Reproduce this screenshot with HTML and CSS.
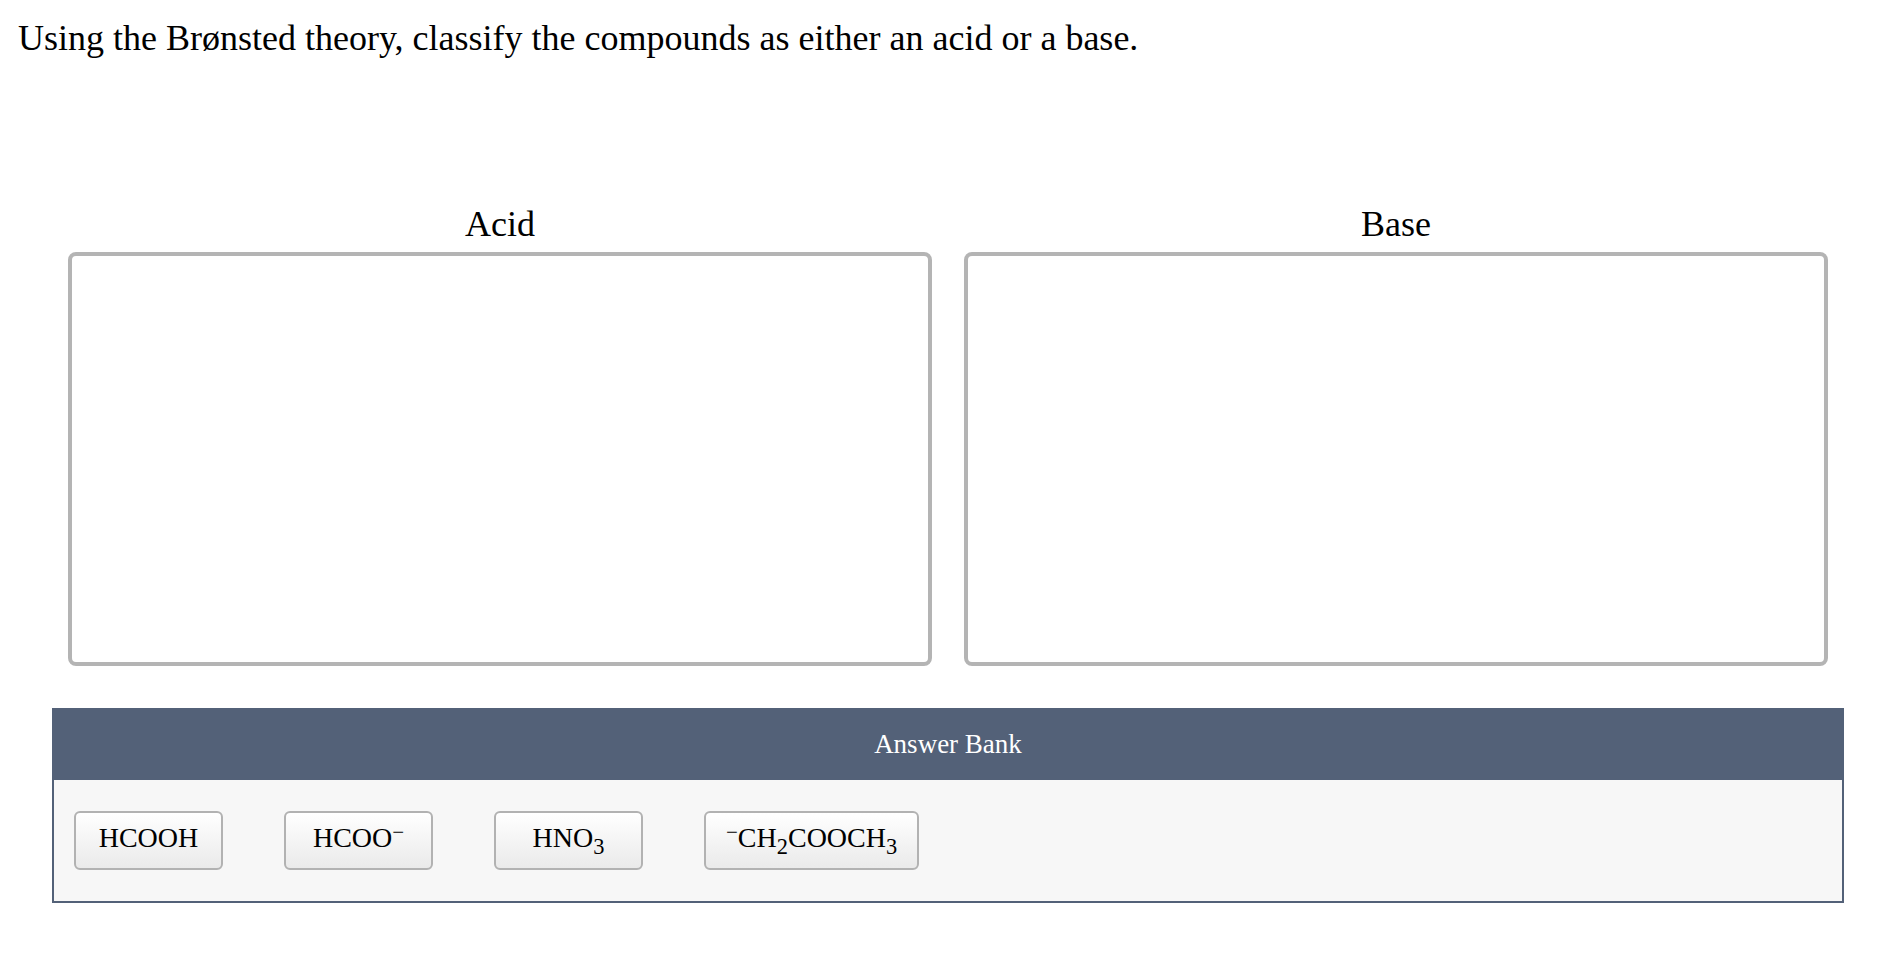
FILE: index.html
```html
<!DOCTYPE html>
<html lang="en">
<head>
<meta charset="utf-8">
<title>Brønsted classification</title>
<link rel="stylesheet" href="styles.css">
</head>
<body>
<p class="prompt">Using the Brønsted theory, classify the compounds as either an acid or a base.</p>
<div class="activity">
  <div class="zones">
    <div class="zone">
      <div class="zone-label">Acid</div>
      <div class="drop"></div>
    </div>
    <div class="zone">
      <div class="zone-label">Base</div>
      <div class="drop"></div>
    </div>
  </div>
  <div class="bank">
    <div class="bank-header">Answer Bank</div>
    <div class="bank-items">
      <div class="chip">HCOOH</div>
      <div class="chip">HCOO<sup>−</sup></div>
      <div class="chip">HNO<sub>3</sub></div>
      <div class="chip"><sup>−</sup>CH<sub>2</sub>COOCH<sub>3</sub></div>
    </div>
  </div>
</div>
</body>
</html>
```

FILE: styles.css
```css
html, body {
  margin: 0;
  padding: 0;
  background: #ffffff;
}

body {
  font-family: "Liberation Serif", "Times New Roman", serif;
  color: #000000;
}

.prompt {
  margin: 18px 0 0 18px;
  font-size: 36px;
  line-height: 40px;
}

.activity {
  margin-left: 52px;
  width: 1792px;
}

.zones {
  display: grid;
  grid-template-columns: 1fr 1fr;
  gap: 32px;
  padding: 0 16px;
  margin-top: 146px;
}

.zone-label {
  text-align: center;
  font-size: 36px;
  line-height: 40px;
  margin-bottom: 8px;
}

.drop {
  box-sizing: border-box;
  height: 414px;
  border: 4px solid #b4b4b4;
  border-radius: 8px;
  background: #ffffff;
}

.bank {
  margin-top: 42px;
  border: 2px solid #536178;
  border-top: none;
  background: #f7f7f7;
}

.bank-header {
  background: #536178;
  color: #ffffff;
  text-align: center;
  font-size: 27px;
  height: 72px;
  line-height: 72px;
  margin: 0 -2px;
}

.bank-items {
  display: flex;
  gap: 61px;
  padding: 31px 20px 31px 20px;
}

.chip {
  box-sizing: border-box;
  height: 59px;
  min-width: 149px;
  padding: 0 20px 5px;
  display: flex;
  align-items: center;
  justify-content: center;
  font-size: 28px;
  border: 2px solid #b2b2b2;
  border-radius: 6px;
  background: linear-gradient(#ffffff, #eaeaea);
  white-space: nowrap;
}

.chip sup {
  font-size: 0.75em;
  line-height: 0;
  position: relative;
  top: -0.3em;
  vertical-align: baseline;
}

.chip sub {
  font-size: 0.8em;
  line-height: 0;
  position: relative;
  top: 0.4em;
  vertical-align: baseline;
}
```
